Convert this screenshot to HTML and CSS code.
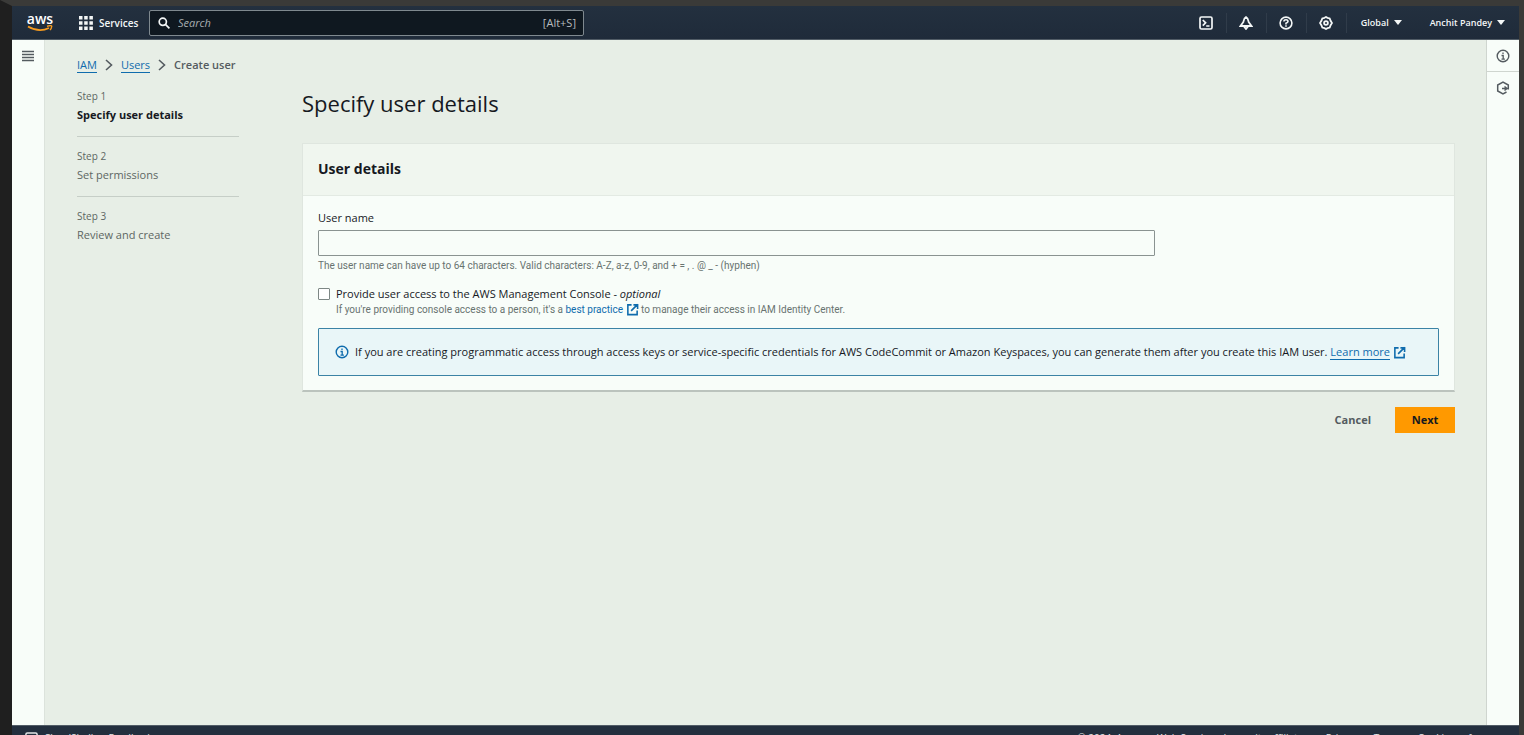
FILE: index.html
```html
<!DOCTYPE html>
<html lang="en">
<head>
<meta charset="utf-8">
<title>Create user | IAM</title>
<link rel="stylesheet" href="styles.css">
</head>
<body>
<svg class="defs" width="0" height="0" aria-hidden="true">
  <symbol id="external" viewBox="0 0 14 14"><path d="M6 2H2v10.500h10V8M8 2h4.500v4.500M12.500 1.500L5.500 8.500" fill="none" stroke="currentColor" stroke-width="1.700"/></symbol>
  <symbol id="chevron" viewBox="0 0 8 14"><path d="M1 2l5.500 5L1 12" fill="none" stroke="currentColor" stroke-width="1.600"/></symbol>
  <symbol id="info" viewBox="0 0 14 14"><circle cx="7" cy="7" r="5.800" fill="none" stroke="currentColor" stroke-width="1.400"/><path d="M7 3.500v1.500M5.500 6.500H7.200v3.500M5.500 10.200h3.400" fill="none" stroke="currentColor" stroke-width="1.300"/></symbol>
</svg>
<header class="topnav">
  <a class="logo" href="#" aria-label="AWS home">
    <span class="logo-word">aws</span>
    <svg class="logo-smile" viewBox="0 0 26 7"><path d="M1 1.500Q12 8 22 3" fill="none" stroke="#f79b1e" stroke-width="1.800"/><path d="M20 1.200Q25 0 24.700 1.500Q24.500 3.500 23 5" fill="none" stroke="#f79b1e" stroke-width="1.400"/></svg>
  </a>
  <button class="services" type="button">
    <svg class="icon" viewBox="0 0 14 14" fill="currentColor"><path d="M0 0h3.500v3.500H0zM5.200 0h3.500v3.500H5.200zM10.400 0h3.500v3.500h-3.500zM0 5.200h3.500v3.500H0zM5.200 5.200h3.500v3.500H5.200zM10.400 5.200h3.500v3.500h-3.500zM0 10.400h3.500v3.500H0zM5.200 10.400h3.500v3.500H5.200zM10.400 10.400h3.500v3.500h-3.500z"/></svg>
    Services
  </button>
  <label class="search">
    <svg class="search-icon" viewBox="0 0 12 12" fill="none" stroke="currentColor" stroke-width="1.700"><circle cx="4.800" cy="4.800" r="3.600"/><path d="M7.400 7.400l4 4"/></svg>
    <input class="search-input" type="search" placeholder="Search" aria-label="Search">
    <span class="shortcut">[Alt+S]</span>
  </label>
  <nav class="tools" aria-label="Account tools">
    <button class="tool" type="button" aria-label="CloudShell"><svg class="icon" viewBox="0 0 14 14" fill="none" stroke="currentColor" stroke-width="1.700"><rect x="1" y="1" width="12" height="12" rx="1.500"/><path d="M3.800 4l2.800 2.800-2.800 2.800M7.200 10h3.300"/></svg></button>
    <button class="tool" type="button" aria-label="Notifications"><svg class="icon" viewBox="0 0 14 14" fill="none" stroke="currentColor" stroke-width="1.800"><path d="M7 1C5 2 4.800 4 4.400 6L1.500 10h11L9.600 6C9.200 4 9 2 7 1zM5 10.500L7 13l2-2.500"/></svg></button>
    <button class="tool" type="button" aria-label="Support"><svg class="icon" viewBox="0 0 14 14" fill="none" stroke="currentColor" stroke-width="1.600"><circle cx="7" cy="7" r="5.900"/><path d="M4.900 5.500Q5 3.800 7 3.800T9 5.500Q9 6.400 7 7.300V8.400M7 9.300v1.500"/></svg></button>
    <button class="tool" type="button" aria-label="Settings"><svg class="icon" viewBox="0 0 14 14" fill="none" stroke="currentColor" stroke-width="1.800"><path d="M5.500 1.800L7 1l1.500.8 2.200.6.900 2.400L13 7l-1.400 2.200-.9 2.400-2.200.6L7 13l-1.500-.8-2.200-.6-.9-2.400L1 7l1.400-2.200.9-2.400z"/><circle cx="7" cy="7" r="1.900"/></svg></button>
    <button class="menu" type="button">Global <span class="caret"></span></button>
    <button class="menu" type="button">Anchit Pandey <span class="caret"></span></button>
  </nav>
</header>
<div class="shell">
  <aside class="rail rail-left">
    <button class="rail-button" type="button" aria-label="Open navigation"><svg class="rail-icon" viewBox="0 0 12 12" stroke="currentColor" stroke-width="1.400"><path d="M0 1.500h12M0 4.500h12M0 7.500h12M0 10.500h12"/></svg></button>
  </aside>
  <main class="content">
    <nav class="crumbs" aria-label="Breadcrumbs">
      <a class="crumb" href="#">IAM</a>
      <svg class="chevron"><use href="#chevron"/></svg>
      <a class="crumb" href="#">Users</a>
      <svg class="chevron"><use href="#chevron"/></svg>
      <span class="crumb-current">Create user</span>
    </nav>
    <div class="wizard">
      <ol class="steps">
        <li class="step"><span class="step-number">Step 1</span><span class="step-name current">Specify user details</span></li>
        <li class="step"><span class="step-number">Step 2</span><span class="step-name">Set permissions</span></li>
        <li class="step"><span class="step-number">Step 3</span><span class="step-name">Review and create</span></li>
      </ol>
      <form class="form">
        <h1 class="title">Specify user details</h1>
        <section class="card">
          <h2 class="card-title">User details</h2>
          <div class="card-body">
            <label class="label" for="username">User name</label>
            <input class="text-input" id="username" type="text">
            <p class="hint">The user name can have up to 64 characters. Valid characters: A-Z, a-z, 0-9, and + = , . @ _ - (hyphen)</p>
            <div class="check">
              <input class="check-box" id="console" type="checkbox">
              <div class="check-text">
                <label class="label" for="console">Provide user access to the AWS Management Console - <i>optional</i></label>
                <p class="hint">If you're providing console access to a person, it's a <a class="hint-link" href="#">best practice <svg class="external"><use href="#external"/></svg></a> to manage their access in IAM Identity Center.</p>
              </div>
            </div>
            <div class="alert">
              <svg class="alert-icon"><use href="#info"/></svg>
              <p class="alert-text">If you are creating programmatic access through access keys or service-specific credentials for AWS CodeCommit or Amazon Keyspaces, you can generate them after you create this IAM user. <a class="alert-link" href="#"><span class="underlined">Learn more</span> <svg class="external"><use href="#external"/></svg></a></p>
            </div>
          </div>
        </section>
        <div class="actions">
          <button class="cancel" type="button">Cancel</button>
          <button class="next" type="button">Next</button>
        </div>
      </form>
    </div>
  </main>
  <aside class="rail rail-right">
    <button class="rail-button" type="button" aria-label="Info"><svg class="rail-icon large"><use href="#info"/></svg></button>
    <button class="rail-button" type="button" aria-label="Tutorials"><svg class="rail-icon large" viewBox="0 0 14 14" fill="none" stroke="currentColor" stroke-width="1.500"><path d="M12.300 8.500V4L7 1.200 1.700 4v6L7 12.800l3.500-1.800M6 7.500h4M8.500 5.500L11 7.500 8.500 9.500"/></svg></button>
  </aside>
</div>
<footer class="footer">
  <svg class="footer-icon" viewBox="0 0 14 14" fill="none" stroke="currentColor" stroke-width="1.600"><rect x="1" y="1" width="12" height="12" rx="1.500"/><path d="M3.800 4l2.800 2.800-2.800 2.800M7.200 10h3.300"/></svg>
  <a class="footer-link" href="#">CloudShell</a>
  <a class="footer-link" href="#">Feedback</a>
  <span class="legal">© 2024, Amazon Web Services, Inc. or its affiliates.</span>
  <a class="footer-link" href="#">Privacy</a>
  <a class="footer-link" href="#">Terms</a>
  <a class="footer-link" href="#">Cookie preferences</a>
</footer>
</body>
</html>
```
FILE: styles.css
```css
* { box-sizing: border-box; }
body {
  margin: 0;
  height: 100vh;
  overflow: hidden;
  display: flex;
  flex-direction: column;
  border: solid #3a3a38;
  border-width: 6px 5px 0 12px;
  border-left-color: #1f1f1f;
  background: #232f3e;
  color: #16191f;
  font: 11px/16px "Open Sans", "Noto Sans", sans-serif;
}
.defs { position: absolute; }
button { font: inherit; color: inherit; background: none; border: 0; padding: 0; }
h1, h2, p, ol { margin: 0; padding: 0; font-weight: 400; }
a { color: #0f6cad; text-decoration: none; }

.topnav {
  flex: 0 0 34px;
  display: flex;
  align-items: center;
  background: linear-gradient(#23303f, #1f2b3a);
  border-bottom: 1px solid #515c66;
  color: #f4f7f7;
  font-size: 10px;
  font-weight: 600;
}
.logo { display: flex; flex-direction: column; width: 26px; margin-left: 15px; align-items: center; color: #fff; }
.logo-word { font: 600 14px/12px "Open Sans", sans-serif; }
.logo-smile { width: 26px; height: 7px; }
.services { display: flex; align-items: center; gap: 6px; margin-left: 26px; width: 70px; white-space: nowrap; }
.icon { width: 14px; height: 14px; flex: none; display: block; }
.search {
  display: flex;
  align-items: center;
  gap: 8px;
  width: 435px;
  height: 26px;
  padding: 0 7px 0 8px;
  border: 1px solid #7f898f;
  border-radius: 2px;
  background: #0f1820;
}
.search-icon { width: 12px; height: 12px; }
.search-input { flex: 1; min-width: 0; border: 0; outline: 0; padding: 0; background: none; color: #fff; font: italic 11px/16px "Open Sans", sans-serif; }
.search-input::placeholder { color: #a7adb0; }
.shortcut { color: #b7bcbf; font-size: 11px; font-weight: 400; }
.tools { display: flex; align-items: center; margin-left: auto; }
.tool { width: 40px; height: 20px; display: grid; place-items: center; border-right: 1px solid #303c4a; }
.menu { display: flex; align-items: center; gap: 5px; padding: 0 14px; font-size: 9px; white-space: nowrap; }
.caret { border: solid transparent; border-width: 5px 4px 0; border-top-color: currentColor; }

.shell { flex: 1; min-height: 0; display: flex; background: #e7eee6; }
.rail { flex: 0 0 33px; background: #f8fdf9; color: #545b60; }
.rail-left { border-right: 1px solid #dce3dc; }
.rail-right { border-left: 1px solid #cfd5cf; }
.rail-button { display: grid; place-items: center; width: 100%; height: 32px; }
.rail-right .rail-button:first-child { border-bottom: 1px solid #cfd5cf; }
.rail-icon { width: 12px; height: 12px; }
.large { width: 14px; height: 14px; }

.content { flex: 1; min-width: 0; padding: 16px 31px 16px 32px; }
.crumbs { display: flex; align-items: center; gap: 8px; height: 18px; color: #545b60; }
.crumb { line-height: 15px; border-bottom: 1px solid #0f6cad; }
.crumb-current { font-weight: 600; }
.chevron { width: 8px; height: 14px; }
.wizard { display: flex; gap: 63px; }
.steps { flex: 0 0 162px; list-style: none; padding-top: 14px; color: #5d6663; }
.step { display: flex; flex-direction: column; gap: 2px; height: 49px; margin-bottom: 11px; border-bottom: 1px solid #c6cec7; }
.step:last-child { border: 0; }
.step-number { font-size: 10px; line-height: 17px; }
.current { color: #16191f; font-weight: 700; }
.form { flex: 1; min-width: 0; }
.title { margin: 13px 0 24px; font-size: 22px; line-height: 32px; }
.card { background: #f8fdf9; border: 1px solid #dfe6df; border-bottom: 2px solid #bbc3bd; }
.card-title { padding: 13px 15px 14px; border-bottom: 1px solid #e3eae3; background: #f0f6ef; font-size: 14px; line-height: 24px; font-weight: 700; }
.card-body { padding: 14px 15px; }
.label { display: block; }
.text-input { display: block; width: calc(75% - 4px); height: 26px; margin: 4px 0 2px; border: 1px solid #8a9391; border-radius: 1px; background: #f8fdf9; }
.hint { color: #687370; font: 10px/16px Roboto, sans-serif; }
.check { display: flex; gap: 6px; margin-top: 12px; }
.check-box { appearance: none; flex: none; width: 12px; height: 12px; margin: 2px 0 0; border: 1px solid #7d8785; border-radius: 1px; background: #fff; }
.check-text .hint { line-height: 15px; }
.external { width: 13px; height: 13px; vertical-align: -3px; }
.alert { display: flex; align-items: center; gap: 6px; height: 48px; margin-top: 11px; padding: 0 16px; border: 1px solid #3b83a5; border-radius: 1px; background: #e9f6f8; }
.alert-icon { width: 14px; height: 14px; flex: none; color: #0f6cad; }
.underlined { border-bottom: 1px solid #0f6cad; }
.actions { display: flex; justify-content: flex-end; align-items: center; gap: 24px; margin-top: 15px; font-weight: 700; }
.cancel { color: #545b60; }
.next { width: 60px; height: 26px; background: #f90; color: #16191f; }

.footer { flex: 0 0 10px; display: flex; align-items: flex-start; gap: 15px; padding: 4px 11px 0 13px; border-top: 1px solid #515c66; overflow: hidden; color: #e3e7e8; font-size: 10px; white-space: nowrap; }
.footer-icon { width: 13px; height: 13px; flex: none; margin: 2px -9px 0 0; }
.footer-link { color: inherit; }
.legal { margin-left: auto; }
```
